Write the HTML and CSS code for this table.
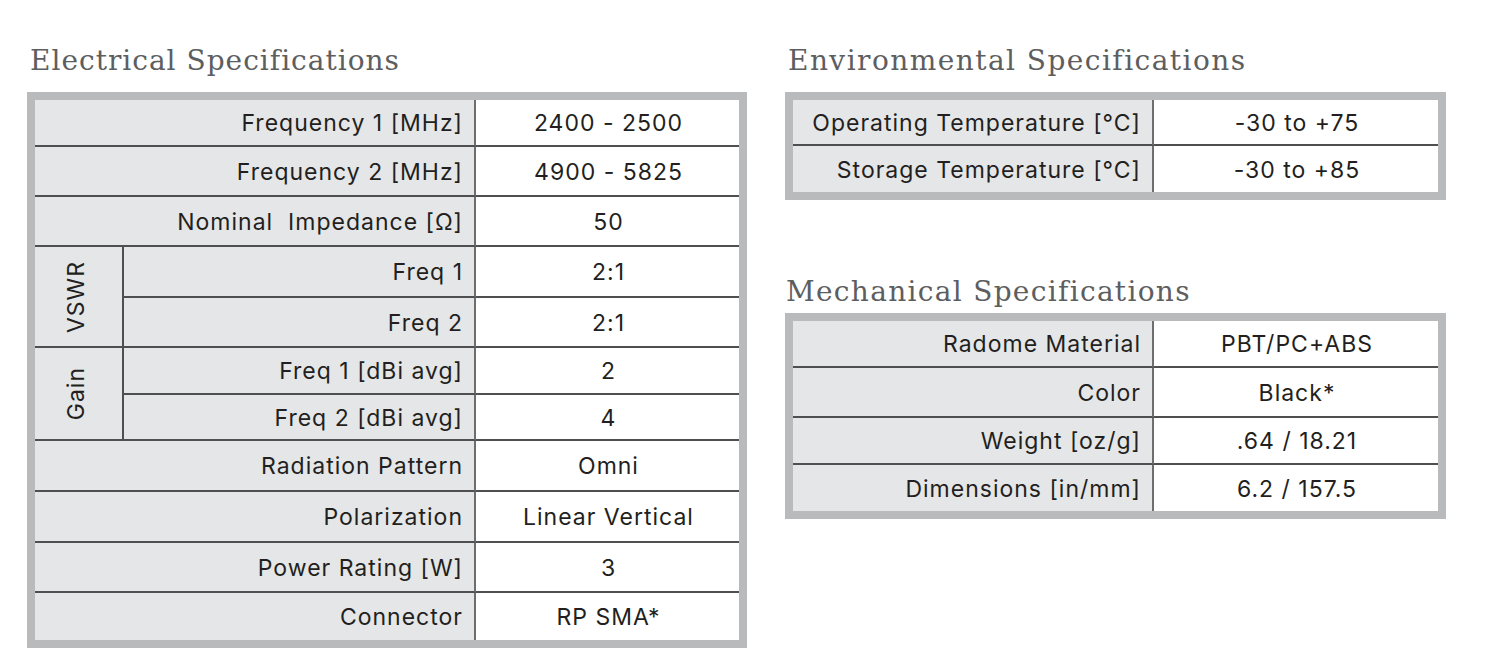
FILE: index.html
```html
<!DOCTYPE html>
<html lang="en">
<head>
<meta charset="utf-8">
<title>Specifications</title>
<link rel="stylesheet" href="styles.css">
</head>
<body>
<main class="page">
  <section class="col col-left">
    <h2 class="title">Electrical Specifications</h2>
    <div class="spec spec-elec">
      <div class="lbl wide">Frequency 1 [MHz]</div><div class="val">2400 - 2500</div>
      <div class="lbl wide">Frequency 2 [MHz]</div><div class="val">4900 - 5825</div>
      <div class="lbl wide">Nominal&nbsp; Impedance [Ω]</div><div class="val">50</div>
      <div class="grp grp-vswr"><span>VSWR</span></div>
      <div class="lbl">Freq 1</div><div class="val">2:1</div>
      <div class="lbl">Freq 2</div><div class="val">2:1</div>
      <div class="grp grp-gain"><span>Gain</span></div>
      <div class="lbl">Freq 1 [dBi avg]</div><div class="val">2</div>
      <div class="lbl">Freq 2 [dBi avg]</div><div class="val">4</div>
      <div class="lbl wide">Radiation Pattern</div><div class="val">Omni</div>
      <div class="lbl wide">Polarization</div><div class="val">Linear Vertical</div>
      <div class="lbl wide">Power Rating [W]</div><div class="val">3</div>
      <div class="lbl wide last">Connector</div><div class="val last">RP SMA*</div>
    </div>
  </section>
  <section class="col col-right">
    <h2 class="title title-env">Environmental Specifications</h2>
    <div class="spec spec-env">
      <div class="lbl">Operating Temperature [°C]</div><div class="val">-30 to +75</div>
      <div class="lbl last">Storage Temperature [°C]</div><div class="val last">-30 to +85</div>
    </div>
    <h2 class="title title-mech">Mechanical Specifications</h2>
    <div class="spec spec-mech">
      <div class="lbl">Radome Material</div><div class="val">PBT/PC+ABS</div>
      <div class="lbl">Color</div><div class="val">Black*</div>
      <div class="lbl">Weight [oz/g]</div><div class="val">.64 / 18.21</div>
      <div class="lbl last">Dimensions [in/mm]</div><div class="val last">6.2 / 157.5</div>
    </div>
  </section>
</main>
</body>
</html>
```
FILE: styles.css
```css
* { box-sizing: border-box; }
html, body { margin: 0; padding: 0; background: #ffffff; }
body { font-family: Inter, "Noto Sans", sans-serif; color: #231f20; }

.page {
  display: flex;
  gap: 38px;
  padding: 45px 0 0 27px;
}

.col { display: flex; flex-direction: column; }
.col-left { width: 720px; }
.col-right { width: 661px; }

.title {
  margin: 0 0 15px 3px;
  font-family: "DejaVu Serif", "Liberation Serif", serif;
  font-weight: normal;
  font-size: 28px;
  line-height: 32px;
  color: #5d5e60;
  letter-spacing: 1px;
}
.title-env { letter-spacing: 1.45px; }
.title-mech { margin-top: 76px; margin-bottom: 5px; margin-left: 1px; letter-spacing: 1.3px; }

.spec {
  display: grid;
  border: 8px solid #b9babc;
  font-size: 23px;
  line-height: 26px;
  letter-spacing: 1px;
}
.spec-elec {
  grid-template-columns: 89px 352px 263px;
  grid-template-rows: 47px 50px 50px 51px 50px 47px 46px 51px 51px 50px 47px;
}
.spec-env {
  grid-template-columns: 361px 284px;
  grid-template-rows: 46px 46px;
}
.spec-mech {
  grid-template-columns: 361px 284px;
  grid-template-rows: 47px 50px 47px 46px;
}

.lbl, .val, .grp {
  display: flex;
  align-items: center;
  border-bottom: 2px solid #4f4f4f;
  padding-top: 1px;
}
.lbl {
  justify-content: flex-end;
  padding-right: 11px;
  background: #e5e6e7;
  border-right: 2px solid #6e6e6e;
}
.spec-elec .lbl.wide { grid-column: 1 / 3; }
.val {
  justify-content: center;
  background: #ffffff;
  padding-left: 2px;
}
.grp {
  grid-row: span 2;
  justify-content: center;
  background: #e5e6e7;
  border-right: 2px solid #4f4f4f;
  padding-right: 6px;
}
.grp span {
  writing-mode: vertical-rl;
  transform: rotate(180deg);
}
.last { border-bottom: 0; }
```
